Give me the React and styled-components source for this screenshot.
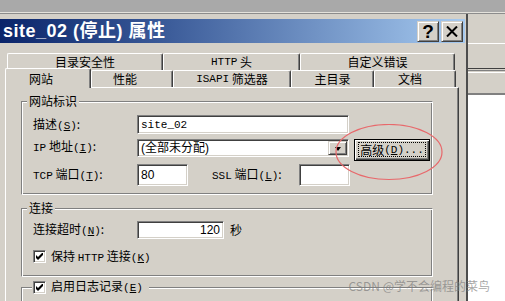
import styled, { createGlobalStyle } from 'styled-components';

const CJK = `"Noto Sans CJK SC", "Liberation Sans", sans-serif`;
const MONO = `"Liberation Mono", "Noto Sans CJK SC", monospace`;

const GlobalStyle = createGlobalStyle`
  html, body {
    margin: 0;
    padding: 0;
    background: #d4d0c8;
  }
  #root {
    width: 505px;
    height: 301px;
    overflow: hidden;
  }
`;

const Page = styled.div`
  position: relative;
  width: 505px;
  height: 301px;
  overflow: hidden;
  background: #d4d0c8;
  font-family: ${CJK};
  font-size: 12px;
  line-height: 14px;
  color: #000;
`;

const TopBand = styled.div`
  height: 12px;
  background: #a9a9a9;
  border-bottom: 1px solid #e4e2dc;
`;

const Main = styled.div`
  display: flex;
  height: 287px;
  border-top: 1px solid #8c8c8c;
`;

const Dialog = styled.div`
  flex: none;
  width: 466px;
  border-right: 2px solid #4d4d4d;
  padding-top: 5px;
  display: flex;
  flex-direction: column;
`;

const TitleBar = styled.div`
  flex: none;
  width: 465px;
  height: 24px;
  box-sizing: border-box;
  padding: 0 2px 0 3px;
  display: flex;
  align-items: center;
  justify-content: space-between;
  background: linear-gradient(to right, #0a246a 0%, #3a5a98 35%, #a6caf0 100%);
`;

const TitleText = styled.div`
  color: #fff;
  font-family: "Liberation Sans", "Noto Sans CJK SC", sans-serif;
  font-weight: 700;
  font-size: 18px;
  line-height: 22px;
  letter-spacing: 0.5px;
  white-space: nowrap;
`;

const CaptionButtons = styled.div`
  display: flex;
  gap: 2px;
`;

const CaptionButton = styled.div`
  width: 22px;
  height: 21px;
  box-sizing: border-box;
  background: #d4d0c8;
  border: 1px solid;
  border-color: #d4d0c8 #404040 #404040 #d4d0c8;
  box-shadow: inset 1px 1px 0 #fff, inset -1px -1px 0 #808080;
  display: flex;
  align-items: center;
  justify-content: center;
  font-family: "Liberation Sans", sans-serif;
  font-weight: 700;
  font-size: 19px;
  line-height: 19px;
`;

const DialogBody = styled.div`
  flex: 1;
  padding: 10px 7px 0 5px;
  display: flex;
  flex-direction: column;
  min-height: 0;
`;

const TabRow = styled.div`
  display: flex;
  align-items: flex-end;
  height: 17px;
  padding-left: ${(p) => p.$indent || 0}px;
`;

const Tab = styled.div`
  position: relative;
  z-index: ${(p) => (p.$active ? 2 : 1)};
  flex: none;
  box-sizing: border-box;
  width: ${(p) => p.$w}px;
  height: ${(p) => (p.$active ? 20 : 17)}px;
  margin-bottom: ${(p) => (p.$active ? -1 : 0)}px;
  padding-right: ${(p) => (p.$shift || 0) * 2}px;
  background: #d4d0c8;
  border-top: 1px solid #fff;
  border-left: 1px solid #fff;
  border-right: 1px solid #404040;
  border-radius: 2px 2px 0 0;
  box-shadow: inset -1px 0 0 #808080;
  display: flex;
  align-items: center;
  justify-content: center;
  white-space: nowrap;
`;

const Panel = styled.div`
  flex: 1;
  width: 454px;
  box-sizing: border-box;
  border-top: 1px solid #fff;
  border-left: 1px solid #fff;
  border-right: 1px solid #404040;
  box-shadow: inset -1px 0 0 #808080;
  padding: 0 0 0 15px;
`;

const Group = styled.fieldset`
  width: 412px;
  box-sizing: border-box;
  margin: ${(p) => p.$mt}px 0 0;
  padding: 0;
  min-width: 0;
  border: 1px solid #808080;
  border-right-color: #fff;
  border-bottom-color: #fff;
  box-shadow: inset 1px 1px 0 #fff, inset -1px -1px 0 #808080;
  ${(p) => (p.$h ? `height: ${p.$h}px;` : '')}
`;

const Legend = styled.legend`
  margin-left: ${(p) => p.$ml}px;
  padding: 0 ${(p) => p.$pr ?? 2}px 0 ${(p) => p.$pl ?? 2}px;
  background: #d4d0c8;
  line-height: ${(p) => p.$lh || 12}px;
  display: flex;
  align-items: center;
  gap: 5px;
`;

const GroupBody = styled.div`
  padding: ${(p) => p.$pt}px 0 ${(p) => p.$pb}px 11px;
`;

const Row = styled.div`
  display: flex;
  align-items: ${(p) => (p.$top ? 'flex-start' : 'center')};
  height: ${(p) => p.$h}px;
  margin-top: ${(p) => p.$mt || 0}px;
`;

const Label = styled.span`
  flex: none;
  width: ${(p) => p.$w}px;
  margin-left: ${(p) => p.$ml || 0}px;
  white-space: nowrap;
`;

const Lt = styled.span`
  font-family: ${MONO};
  font-size: 11px;
`;

const Field = styled.div`
  flex: none;
  box-sizing: border-box;
  width: ${(p) => p.$w}px;
  height: ${(p) => p.$h}px;
  background: #fff;
  border: 1px solid;
  border-color: #808080 #fff #fff #808080;
  box-shadow: inset 1px 1px 0 #404040, inset -1px -1px 0 #d4d0c8;
  padding: 0 ${(p) => (p.$right ? 3 : 1)}px 0 3px;
  display: flex;
  align-items: center;
  justify-content: ${(p) => (p.$right ? 'flex-end' : 'flex-start')};
  font-family: ${(p) => (p.$mono ? MONO : `"Liberation Sans", "Noto Sans CJK SC", sans-serif`)};
  font-size: ${(p) => (p.$mono ? 11 : 12)}px;
  white-space: nowrap;
`;

const ComboText = styled.span`
  flex: 1;
`;

const DropButton = styled.div`
  flex: none;
  width: 19px;
  height: 14px;
  box-sizing: border-box;
  background: #d4d0c8;
  border: 1px solid;
  border-color: #d4d0c8 #404040 #404040 #d4d0c8;
  box-shadow: inset 1px 1px 0 #fff, inset -1px -1px 0 #808080;
  display: flex;
  align-items: center;
  justify-content: center;

  &::after {
    content: '';
    border-left: 3.5px solid transparent;
    border-right: 3.5px solid transparent;
    border-top: 4px solid #000;
    margin-top: 1px;
  }
`;

const DefaultButton = styled.div`
  flex: none;
  width: 76px;
  height: 22px;
  margin-left: 5px;
  box-sizing: border-box;
  border: 1px solid #000;
  background: #d4d0c8;
  box-shadow: inset 1px 1px 0 #fff, inset -1px -1px 0 #404040, inset -2px -2px 0 #808080;
  padding: 2px 3px 3px 3px;
  display: flex;
`;

const FocusRect = styled.div`
  flex: 1;
  border: 1px dotted #000;
  display: flex;
  align-items: center;
  justify-content: center;
  white-space: nowrap;
`;

const Unit = styled.span`
  margin-left: 6px;
`;

const CheckBox = styled.div`
  flex: none;
  width: 13px;
  height: 13px;
  box-sizing: border-box;
  background: #fff;
  border: 1px solid;
  border-color: #808080 #fff #fff #808080;
  box-shadow: inset 1px 1px 0 #404040, inset -1px -1px 0 #d4d0c8;
  display: flex;
  align-items: center;
  justify-content: center;
`;

const CheckLabel = styled.span`
  margin-left: 5px;
  white-space: nowrap;
`;

const Side = styled.div`
  flex: 1;
  display: flex;
  flex-direction: column;
`;

const SideBand = styled.div`
  flex: ${(p) => (p.$fill ? 1 : 'none')};
  height: ${(p) => (p.$fill ? 'auto' : `${p.$h}px`)};
  background: ${(p) => p.$bg || '#d4d0c8'};
  border-bottom: ${(p) => (p.$line ? `${p.$lw || 1}px solid ${p.$line}` : 'none')};
`;

const Annotation = styled.svg`
  position: absolute;
  left: 335px;
  top: 124px;
  pointer-events: none;
`;

const Watermark = styled.div`
  position: absolute;
  right: 15px;
  top: 279px;
  font-family: ${CJK};
  font-size: 12px;
  line-height: 14px;
  color: rgba(125, 125, 125, 0.7);
  white-space: nowrap;
`;

function Check() {
  return (
    <svg width="7" height="7" viewBox="0 0 7 7">
      <path d="M0 2 L2 4 L7 -1 L7 2 L2 7 L0 5 Z" fill="#000" />
    </svg>
  );
}

function Acc({ k }) {
  return (
    <Lt>
      (<u>{k}</u>)
    </Lt>
  );
}

export default function App() {
  return (
    <Page>
      <GlobalStyle />
      <TopBand />
      <Main>
        <Dialog>
          <TitleBar>
            <TitleText>site_02 (停止) 属性</TitleText>
            <CaptionButtons>
              <CaptionButton>?</CaptionButton>
              <CaptionButton>
                <svg width="12" height="11" viewBox="0 0 12 11">
                  <path d="M1 0.5 L11 10.5 M11 0.5 L1 10.5" stroke="#000" strokeWidth="2" />
                </svg>
              </CaptionButton>
            </CaptionButtons>
          </TitleBar>

          <DialogBody>
            <TabRow $indent={2}>
              <Tab $w={156}>目录安全性</Tab>
              <Tab $w={137}>
                <Lt>HTTP</Lt>&nbsp;头
              </Tab>
              <Tab $w={155}>自定义错误</Tab>
            </TabRow>
            <TabRow>
              <Tab $w={86} $active $shift={7}>网站</Tab>
              <Tab $w={82} $shift={7}>性能</Tab>
              <Tab $w={118}>
                <Lt>ISAPI</Lt>&nbsp;筛选器
              </Tab>
              <Tab $w={83}>主目录</Tab>
              <Tab $w={82} $shift={5}>文档</Tab>
            </TabRow>

            <Panel>
              <Group $mt={7}>
                <Legend $ml={5}>网站标识</Legend>
                <GroupBody $pt={8} $pb={8}>
                  <Row $h={19}>
                    <Label $w={104}>
                      描述<Acc k="S" />:
                    </Label>
                    <Field $w={212} $h={19} $mono>
                      site_02
                    </Field>
                  </Row>
                  <Row $h={18} $mt={5} $top>
                    <Label $w={104}>
                      <Lt>IP</Lt> 地址<Acc k="I" />:
                    </Label>
                    <Field $w={212} $h={18}>
                      <ComboText>(全部未分配)</ComboText>
                      <DropButton />
                    </Field>
                    <DefaultButton>
                      <FocusRect>
                        高级<Lt>(<u>D</u>)...</Lt>
                      </FocusRect>
                    </DefaultButton>
                  </Row>
                  <Row $h={22} $mt={7}>
                    <Label $w={104}>
                      <Lt>TCP</Lt> 端口<Acc k="T" />:
                    </Label>
                    <Field $w={51} $h={22}>
                      80
                    </Field>
                    <Label $w={87} $ml={24}>
                      <Lt>SSL</Lt> 端口<Acc k="L" />:
                    </Label>
                    <Field $w={51} $h={22} />
                  </Row>
                </GroupBody>
              </Group>

              <Group $mt={7}>
                <Legend $ml={5}>连接</Legend>
                <GroupBody $pt={7} $pb={13}>
                  <Row $h={18}>
                    <Label $w={104}>
                      连接超时<Acc k="N" />:
                    </Label>
                    <Field $w={87} $h={18} $right>
                      120
                    </Field>
                    <Unit>秒</Unit>
                  </Row>
                  <Row $h={13} $mt={11}>
                    <CheckBox>
                      <Check />
                    </CheckBox>
                    <CheckLabel>
                      保持 <Lt>HTTP</Lt> 连接<Acc k="K" />
                    </CheckLabel>
                  </Row>
                </GroupBody>
              </Group>

              <Group $mt={2} $h={40}>
                <Legend $ml={10} $pl={1} $pr={6} $lh={13}>
                  <CheckBox>
                    <Check />
                  </CheckBox>
                  <span>
                    启用日志记录<Acc k="E" />
                  </span>
                </Legend>
              </Group>
            </Panel>
          </DialogBody>
        </Dialog>

        <Side>
          <SideBand $h={29} $line="#ffffff" />
          <SideBand $h={24} $line="#404040" />
          <SideBand $h={1} $line="#808080" />
          <SideBand $h={1} $line="#ffffff" />
          <SideBand $h={20} $line="#808080" $lw={2} />
          <SideBand $fill $bg="#ffffff" />
        </Side>
      </Main>

      <Annotation width="110" height="58" viewBox="0 0 110 58">
        <ellipse cx="54" cy="28" rx="53" ry="27.5" fill="none" stroke="#e8686b" strokeWidth="1.2" />
      </Annotation>
      <Watermark>CSDN @学不会编程的菜鸟</Watermark>
    </Page>
  );
}
